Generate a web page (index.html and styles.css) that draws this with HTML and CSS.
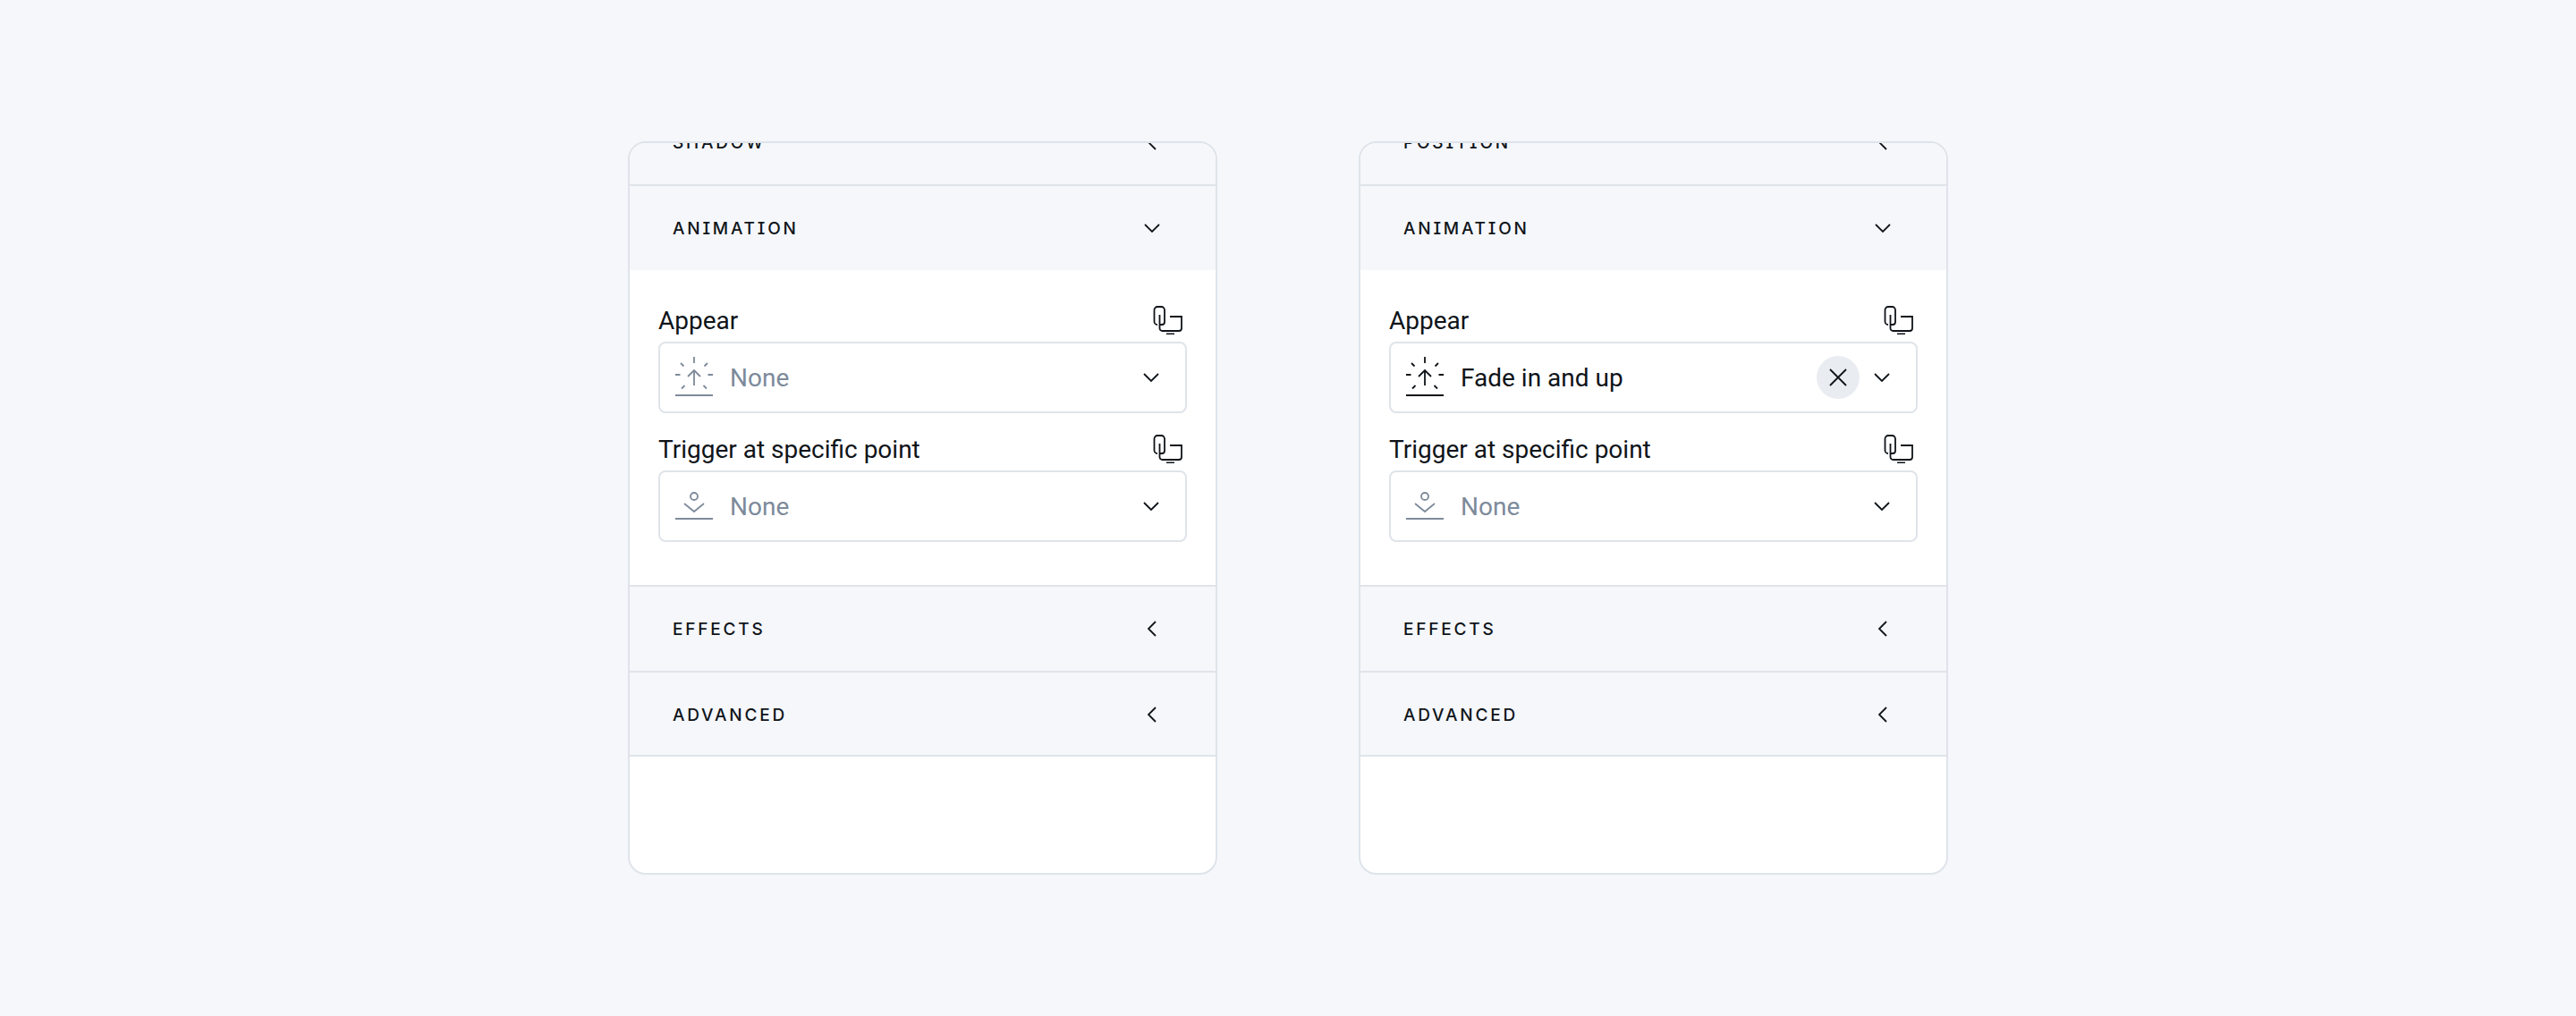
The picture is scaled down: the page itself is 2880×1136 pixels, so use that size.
FILE: index.html
```html
<!DOCTYPE html>
<html lang="en">
<head>
<meta charset="utf-8">
<title>Animation panels</title>
<link rel="stylesheet" href="styles.css">
</head>
<body>
<svg class="defs" width="0" height="0" aria-hidden="true">
  <symbol id="down" viewBox="0 0 18 10"><path d="M1 1l8 8 8-8"/></symbol>
  <symbol id="left" viewBox="0 0 10 18"><path d="M9 1L1 9l8 8"/></symbol>
  <symbol id="device" viewBox="0 0 34 32"><path d="M5 1h4.500a3.500 3.500 0 0 1 3.500 3.500V18a3 3 0 0 1-3 3H8M5 1a3.500 3.500 0 0 0-3.500 3.500v13A3.500 3.500 0 0 0 5 21M7.500 10v15a3 3 0 0 0 3 3h18.500a3 3 0 0 0 3-3V12H19M15 31.500h9"/></symbol>
  <symbol id="appear" viewBox="0 0 42 44"><path d="M21 0v7M0 20h5.500M36.500 20H42M6 7l3.500 3.500M36 7l-3.500 3.500M7 35.500l3.500-3.500M35 35.500L31.500 32M21 15v17M14 22l7-7 7 7"/><path class="thick" d="M0 43h42"/></symbol>
  <symbol id="trigger" viewBox="0 0 42 44"><circle cx="21" cy="6" r="4"/><path d="M10 14l11 9 11-9"/><path class="thick" d="M0 31h42"/></symbol>
</svg>
<main class="page">
  <section class="card">
    <div class="clipped"><div class="head inner"><span>SHADOW</span><svg class="chev-left"><use href="#left"/></svg></div></div>
    <div class="head"><span>ANIMATION</span><svg class="chev-down"><use href="#down"/></svg></div>
    <div class="body">
      <div class="label-row"><label>Appear</label><svg class="device"><use href="#device"/></svg></div>
      <div class="select muted"><svg class="type-icon"><use href="#appear"/></svg><span class="value">None</span><svg class="chev-down dark"><use href="#down"/></svg></div>
      <div class="label-row second"><label>Trigger at specific point</label><svg class="device"><use href="#device"/></svg></div>
      <div class="select muted"><svg class="type-icon low"><use href="#trigger"/></svg><span class="value">None</span><svg class="chev-down dark"><use href="#down"/></svg></div>
    </div>
    <div class="head ruled"><span>EFFECTS</span><svg class="chev-left"><use href="#left"/></svg></div>
    <div class="head ruled"><span>ADVANCED</span><svg class="chev-left"><use href="#left"/></svg></div>
  </section>
  <section class="card">
    <div class="clipped"><div class="head inner"><span>POSITION</span><svg class="chev-left"><use href="#left"/></svg></div></div>
    <div class="head"><span>ANIMATION</span><svg class="chev-down"><use href="#down"/></svg></div>
    <div class="body">
      <div class="label-row"><label>Appear</label><svg class="device"><use href="#device"/></svg></div>
      <div class="select"><svg class="type-icon"><use href="#appear"/></svg><span class="value">Fade in and up</span>
        <span class="clear"><svg viewBox="0 0 20 20"><path d="M1 1l18 18M19 1L1 19"/></svg></span>
        <svg class="chev-down dark"><use href="#down"/></svg></div>
      <div class="label-row second"><label>Trigger at specific point</label><svg class="device"><use href="#device"/></svg></div>
      <div class="select muted"><svg class="type-icon low"><use href="#trigger"/></svg><span class="value">None</span><svg class="chev-down dark"><use href="#down"/></svg></div>
    </div>
    <div class="head ruled"><span>EFFECTS</span><svg class="chev-left"><use href="#left"/></svg></div>
    <div class="head ruled"><span>ADVANCED</span><svg class="chev-left"><use href="#left"/></svg></div>
  </section>
</main>
</body>
</html>
```
FILE: styles.css
```css
* { box-sizing: border-box; }
html, body { margin: 0; height: 100%; }
body {
  background: #f5f7fb;
  color: #0f1419;
  font-family: Roboto, "Liberation Sans", sans-serif;
  overflow: hidden;
}
.defs { position: absolute; }
svg { display: block; flex: none; overflow: visible; }
symbol path, symbol circle, .clear path {
  fill: none;
  stroke: currentColor;
  stroke-width: 1.8;
}
symbol .thick { stroke-width: 2; }
.page {
  display: flex;
  gap: 158px;
  padding: 158px 0 0 702px;
}
.card {
  width: 659px;
  height: 820px;
  background: #fff;
  border: 2px solid #dfe4ea;
  border-radius: 20px;
  overflow: hidden;
}
.head {
  display: flex;
  align-items: center;
  justify-content: space-between;
  height: 94px;
  padding: 0 63px 0 48px;
  background: #f5f7fb;
  font-family: Inter, Roboto, sans-serif;
  font-feature-settings: "cv08";
  font-size: 19px;
  font-weight: 500;
  letter-spacing: 2.8px;
  line-height: 24px;
}
.head span { padding-top: 1px; }
.clipped {
  height: 48px;
  overflow: hidden;
  border-bottom: 2px solid #dfe4ea;
  background: #f5f7fb;
}
.inner { margin-top: -48px; }
.ruled { border-top: 2px solid #dfe4ea; height: 96px; }
.ruled:last-child { border-bottom: 2px solid #dfe4ea; padding-top: 2px; }
.chev-down { width: 18px; height: 10px; margin-right: -1px; }
.chev-left { width: 10px; height: 18px; margin-right: 3px; }
.body {
  height: 352px;
  padding: 38px 32px 0;
}
.label-row {
  display: flex;
  align-items: center;
  justify-content: space-between;
  height: 36px;
  margin-bottom: 6px;
}
.label-row label { font-size: 28px; line-height: 36px; padding-top: 2px; }
.device { width: 34px; height: 32px; margin-right: 4px; }
.second { margin-top: 22px; }
.select {
  display: flex;
  align-items: center;
  height: 80px;
  padding: 0 30px 0 17px;
  border: 2px solid #dfe4ea;
  border-radius: 8px;
  font-size: 28px;
  line-height: 36px;
}
.muted { color: #7d8a9a; }
.dark { color: #0f1419; }
.type-icon { width: 42px; height: 44px; margin-top: -2px; }
.type-icon.low { margin-top: 10px; }
.value { flex: 1; margin-left: 19px; padding-top: 1px; }
.clear {
  display: flex;
  align-items: center;
  justify-content: center;
  width: 48px;
  height: 48px;
  margin-right: 16px;
  border-radius: 50%;
  background: #e9ecf1;
}
.clear svg { width: 20px; height: 20px; }
```
